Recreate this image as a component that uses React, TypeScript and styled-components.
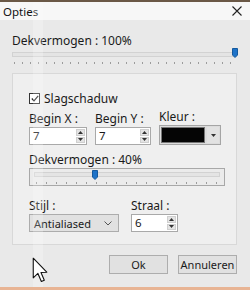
import styled, { createGlobalStyle } from "styled-components";

const GlobalStyle = createGlobalStyle`
    html, body {
        margin: 0;
        padding: 0;
        background: #e9e9e9;
    }
    body {
        font-family: "Noto Sans", "Liberation Sans", sans-serif;
        font-size: 11px;
        color: #1a1a1a;
    }
`;

const Window = styled.div`
    position: relative;
    width: 250px;
    height: 290px;
    display: flex;
    flex-direction: column;
    background: #e9e9e9;
    overflow: hidden;
`;

const TopEdge = styled.div`
    height: 2px;
    background: #6a5846;
`;

const TitleBar = styled.div`
    height: 18px;
    display: flex;
    align-items: center;
    justify-content: space-between;
    padding: 0 8px 0 3px;
    background: #f7f7f7;
    font-size: 11.5px;
    color: #111;
`;

const Body = styled.div`
    flex: 1;
    display: flex;
    flex-direction: column;
    padding: 14px 13px 0 12px;
`;

const Label = styled.div`
    line-height: 13px;
    font-size: 12px;
    white-space: nowrap;
`;

const Slider = styled.div<{ $boxed?: boolean }>`
    position: relative;
    height: ${p => (p.$boxed ? "16px" : "18px")};
    margin-top: ${p => (p.$boxed ? "0" : "2px")};
    border: ${p => (p.$boxed ? "1px solid #a8a8a8" : "none")};
    background: ${p => (p.$boxed ? "#ebebeb" : "transparent")};
    padding: 0 ${p => (p.$boxed ? "4px" : "0")};
`;

const Track = styled.div`
    margin-top: 3px;
    height: 3px;
    border: 1px solid #d2d2d2;
    background: #e4e4e4;
`;

const Ticks = styled.div<{ $step: number }>`
    height: 2px;
    margin: 5px 2px 0;
    background: repeating-linear-gradient(
        to right,
        #9c9c9c 0,
        #9c9c9c 1px,
        transparent 1px,
        transparent ${p => p.$step}px
    );
`;

const Thumb = styled.svg<{ $left: number; $top: number }>`
    position: absolute;
    left: ${p => p.$left}px;
    top: ${p => p.$top}px;
`;

const Group = styled.div`
    margin-top: 6px;
    height: 151px;
    border: 1px solid #d8d8d8;
    background: #efefef;
    padding: 19px 11px 0 16px;
    display: flex;
    flex-direction: column;
`;

const CheckRow = styled.label`
    display: flex;
    align-items: center;
    gap: 4px;
    height: 11px;
    font-size: 12px;
`;

const Box = styled.span`
    width: 9px;
    height: 9px;
    border: 1px solid #333;
    background: #fff;
    display: flex;
    align-items: center;
    justify-content: center;
`;

const FieldRow = styled.div<{ $top: number }>`
    display: flex;
    align-items: flex-end;
    gap: 8px;
    margin-top: ${p => p.$top}px;
`;

const Field = styled.div<{ $w: number; $top?: number; $left?: number }>`
    width: ${p => p.$w}px;
    margin-top: ${p => p.$top ?? 0}px;
    margin-left: ${p => p.$left ?? 0}px;
    display: flex;
    flex-direction: column;
    gap: 2px;
`;

const SpinBox = styled.div`
    height: 16px;
    display: flex;
    border: 1px solid #a9a9a9;
    background: #fff;
`;

const SpinValue = styled.span`
    flex: 1;
    padding-left: 3px;
    line-height: 16px;
    font-size: 11.5px;
`;

const SpinButtons = styled.div`
    width: 9px;
    margin: 1px;
    display: flex;
    flex-direction: column;
    gap: 1px;
`;

const SpinButton = styled.div`
    flex: 1;
    background: #e4e4e4;
    border: 1px solid #cfcfcf;
    display: flex;
    align-items: center;
    justify-content: center;
`;

const ColorPicker = styled.div`
    height: 16px;
    display: flex;
    gap: 2px;
    border: 1px solid #a5a5a5;
    background: #dcdcdc;
    padding: 1px;
`;

const Swatch = styled.div`
    flex: 1;
    background: #050505;
    border: 1px solid #777;
`;

const DropButton = styled.div`
    width: 12px;
    background: #e2e2e2;
    display: flex;
    align-items: center;
    justify-content: center;
`;

const Select = styled.div`
    height: 16px;
    border: 1px solid #acacac;
    background: #e1e1e1;
    display: flex;
    align-items: center;
    justify-content: space-between;
    padding: 0 6px 0 4px;
    font-size: 11px;
`;

const ButtonRow = styled.div`
    display: flex;
    justify-content: flex-end;
    gap: 10px;
    margin-top: 10px;
`;

const Button = styled.button`
    width: 59px;
    height: 19px;
    border: 1px solid #adadad;
    background: #e1e1e1;
    font-family: inherit;
    font-size: 11px;
    color: #1a1a1a;
    padding: 0;
`;

const BottomEdge = styled.div`
    height: 3px;
    background: #e8b494;
`;

const Glare = styled.div`
    position: absolute;
    left: 33px;
    top: 2px;
    width: 10px;
    bottom: 3px;
    background: rgba(255, 255, 255, 0.22);
    pointer-events: none;
`;

const Cursor = styled.svg`
    position: absolute;
    left: 32px;
    top: 257px;
`;

function ThumbIcon() {
    return (
        <path d="M0.5 0.5 H5.5 V7 L3 9.5 L0.5 7 Z" fill="#1f73c8" stroke="#155a9e" strokeWidth="1" />
    );
}

function Arrow({ up }: { up?: boolean }) {
    return (
        <svg width="5" height="3" viewBox="0 0 5 3">
            <path d={up ? "M0 3 L2.5 0 L5 3 Z" : "M0 0 L2.5 3 L5 0 Z"} fill="#333" />
        </svg>
    );
}

function Spin({ value }: { value: string }) {
    return (
        <SpinBox>
            <SpinValue>{value}</SpinValue>
            <SpinButtons>
                <SpinButton><Arrow up /></SpinButton>
                <SpinButton><Arrow /></SpinButton>
            </SpinButtons>
        </SpinBox>
    );
}

export default function App() {
    return (
        <>
            <GlobalStyle />
            <Window>
                <TopEdge />
                <TitleBar>
                    <span>Opties</span>
                    <svg width="10" height="10" viewBox="0 0 10 10">
                        <path d="M0.5 0.5 L9.5 9.5 M9.5 0.5 L0.5 9.5" stroke="#222" strokeWidth="1.1" />
                    </svg>
                </TitleBar>
                <Body>
                    <Label>Dekvermogen : 100%</Label>
                    <Slider>
                        <Track />
                        <Ticks $step={8} />
                        <Thumb $left={220} $top={-1} width="6" height="10" viewBox="0 0 6 10">
                            <ThumbIcon />
                        </Thumb>
                    </Slider>
                    <Group>
                        <CheckRow>
                            <Box>
                                <svg width="8" height="7" viewBox="0 0 8 7">
                                    <path d="M0.8 3.5 L3 5.8 L7.2 0.8" fill="none" stroke="#222" strokeWidth="1.2" />
                                </svg>
                            </Box>
                            Slagschaduw
                        </CheckRow>
                        <FieldRow $top={6}>
                            <Field $w={58}>
                                <Label>Begin X :</Label>
                                <Spin value="7" />
                            </Field>
                            <Field $w={56}>
                                <Label>Begin Y :</Label>
                                <Spin value="7" />
                            </Field>
                            <Field $w={62}>
                                <Label>Kleur :</Label>
                                <ColorPicker>
                                    <Swatch />
                                    <DropButton><Arrow /></DropButton>
                                </ColorPicker>
                            </Field>
                        </FieldRow>
                        <Field $w={196} $top={8}>
                            <Label>Dekvermogen : 40%</Label>
                            <Slider $boxed>
                                <Track />
                                <Ticks $step={10} />
                                <Thumb $left={62} $top={1} width="6" height="10" viewBox="0 0 6 10">
                                    <ThumbIcon />
                                </Thumb>
                            </Slider>
                        </Field>
                        <FieldRow $top={13}>
                            <Field $w={90}>
                                <Label>Stijl :</Label>
                                <Select>
                                    <span>Antialiased</span>
                                    <svg width="8" height="5" viewBox="0 0 8 5">
                                        <path d="M0.5 0.5 L4 4 L7.5 0.5" fill="none" stroke="#555" strokeWidth="1" />
                                    </svg>
                                </Select>
                            </Field>
                            <Field $w={47} $left={4}>
                                <Label>Straal :</Label>
                                <Spin value="6" />
                            </Field>
                        </FieldRow>
                    </Group>
                    <ButtonRow>
                        <Button>Ok</Button>
                        <Button>Annuleren</Button>
                    </ButtonRow>
                </Body>
                <BottomEdge />
                <Glare />
                <Cursor width="16" height="27" viewBox="0 0 13 22">
                    <path d="M1 1 V17 L4.8 13.4 L7.6 20 L10 19 L7.3 12.6 L12 12.4 Z" fill="#fff" stroke="#111" strokeWidth="0.9" strokeLinejoin="round" />
                </Cursor>
            </Window>
        </>
    );
}
